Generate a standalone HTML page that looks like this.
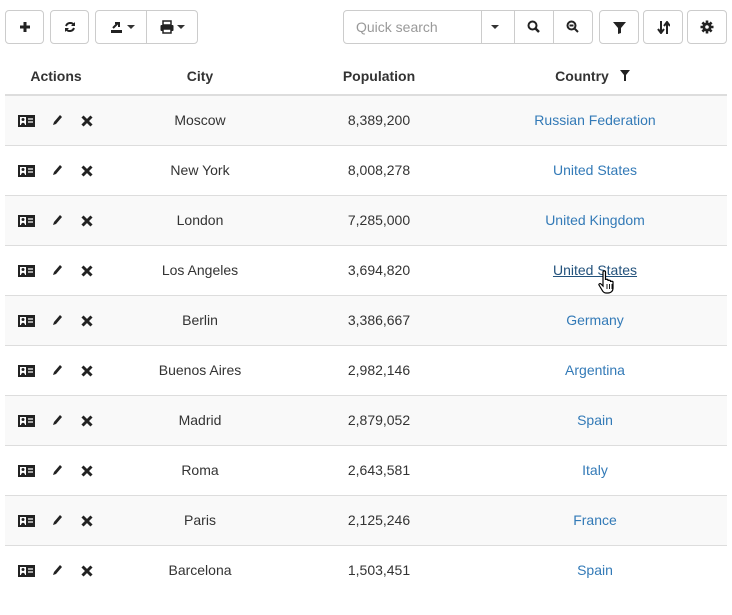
<!DOCTYPE html>
<html><head><style>
*{box-sizing:border-box;margin:0;padding:0}
body{width:732px;height:615px;background:#fff;font-family:"Liberation Sans",sans-serif;font-size:14px;color:#333;position:relative;overflow:hidden}
.b{position:absolute;top:10px;height:34px;border:1px solid #ccc;border-radius:4px;background:#fff;display:flex;align-items:center;justify-content:center}
.sep{position:absolute;top:0;bottom:0;width:1px;background:#ccc}
.caret{display:inline-block;width:0;height:0;border-left:4px solid transparent;border-right:4px solid transparent;border-top:4px solid #333;margin-left:3px}
.hdr{position:absolute;top:60px;height:36px;border-bottom:2px solid #ddd;left:5px;width:722px}
.hdr div{position:absolute;top:8px;font-weight:bold;transform:translateX(-50%)}
.row{position:absolute;left:5px;width:722px;height:50px;border-bottom:1px solid #ddd}
.row.o{background:#f9f9f9}
.c{position:absolute;top:16px;transform:translateX(-50%);white-space:nowrap}
a{color:#337ab7;text-decoration:none}
.ic{position:absolute;top:18px}
</style></head><body>
<div class="b" style="left:5px;width:39px"><svg width="12" height="12"><path d="M6 1v10M1 6h10" stroke="#222" stroke-width="3"/></svg></div>
<div class="b" style="left:50px;width:39px"><svg width="12" height="12" viewBox="0 0 12 12"><path d="M10 4A4.5 4.5 0 0 0 2 5M2 8a4.5 4.5 0 0 0 8-1" fill="none" stroke="#222" stroke-width="2"/><path d="M11 1v4H7zM1 11V7h4z" fill="#222"/></svg></div>
<div class="b" style="left:95px;width:103px"><div class="sep" style="left:50px"></div>
<div style="position:absolute;left:14px;top:9px;display:flex;align-items:center"><svg width="14" height="14" viewBox="0 0 14 14"><path d="M3 8l5-5M5 3h4v4" stroke="#222" stroke-width="2" fill="none"/><rect x="1" y="10" width="11" height="3" fill="#222"/></svg><span class="caret"></span></div>
<div style="position:absolute;left:64px;top:9px;display:flex;align-items:center"><svg width="14" height="14" viewBox="0 0 14 14"><rect x="3" y="1" width="8" height="4" fill="none" stroke="#222" stroke-width="1.5"/><rect x="0.5" y="5" width="13" height="6" rx="1" fill="#222"/><rect x="3" y="9" width="8" height="4" fill="#fff" stroke="#222" stroke-width="1.5"/></svg><span class="caret"></span></div></div>
<div class="b" style="left:343px;width:250px;justify-content:flex-start"><span style="color:#999;margin-left:12px">Quick search</span>
<div class="sep" style="left:137px"></div><div class="sep" style="left:170px"></div><div class="sep" style="left:209px"></div>
<span class="caret" style="position:absolute;left:147px;top:14px;margin:0"></span>
<svg style="position:absolute;left:183px;top:9px" width="13" height="13"><circle cx="5.5" cy="5.5" r="4" fill="none" stroke="#222" stroke-width="2"/><path d="M8.5 8.5l3.5 3.5" stroke="#222" stroke-width="2.5"/></svg>
<svg style="position:absolute;left:222px;top:9px" width="13" height="13"><circle cx="5.5" cy="5.5" r="4" fill="none" stroke="#222" stroke-width="2"/><path d="M8.5 8.5l3.5 3.5M3.5 5.5h4" stroke="#222" stroke-width="2"/></svg></div>
<div class="b" style="left:599px;width:40px"><svg width="13" height="13"><path d="M0 1h13L8 7v5l-3 1V7z" fill="#222"/></svg></div>
<div class="b" style="left:643px;width:40px"><svg width="13" height="13"><path d="M4 0v11M1 8l3 4 3-4M10 13V2M7 5l3-4 3 4" stroke="#222" stroke-width="2" fill="none"/></svg></div>
<div class="b" style="left:687px;width:40px"><svg width="14" height="14" viewBox="0 0 14 14"><circle cx="7" cy="7" r="4.5" fill="#222"/><path d="M7 0.5v13M0.5 7h13M2.4 2.4l9.2 9.2M11.6 2.4l-9.2 9.2" stroke="#222" stroke-width="2.6"/><circle cx="7" cy="7" r="1.8" fill="#fff"/></svg></div>
<div class="hdr"><div style="left:51px">Actions</div><div style="left:195px">City</div><div style="left:374px">Population</div><div style="left:577px">Country</div>
<svg style="position:absolute;left:615px;top:10px" width="10" height="11"><path d="M0 0h10L6 5v6H4V5z" fill="#222"/></svg></div>
<div id="rows"></div>
<script>
var d=[["Moscow","8,389,200","Russian Federation"],["New York","8,008,278","United States"],["London","7,285,000","United Kingdom"],["Los Angeles","3,694,820","United States"],["Berlin","3,386,667","Germany"],["Buenos Aires","2,982,146","Argentina"],["Madrid","2,879,052","Spain"],["Roma","2,643,581","Italy"],["Paris","2,125,246","France"],["Barcelona","1,503,451","Spain"]];
var h="";d.forEach(function(r,i){var hov=i==3;
h+='<div class="row'+(i%2==0?' o':'')+'" style="top:'+(96+i*50)+'px;'+(i==9?'border-bottom:none':'')+'">'+
'<svg class="ic" style="left:13px;top:19px" width="17" height="12"><rect width="17" height="12" fill="#222"/><rect x="2" y="2" width="6" height="8" fill="#fff"/><circle cx="5" cy="4.5" r="1.5" fill="#222"/><path d="M3 10c0-3 4-3 4 0" fill="#222"/><path d="M10 4h5M10 7h5" stroke="#fff" stroke-width="1.3"/></svg>'+
'<svg class="ic" style="left:47px" width="11" height="13"><path d="M8 1l2 2-6 7-3 1 1-3z" fill="#222"/></svg>'+
'<svg class="ic" style="left:76px;top:19px" width="12" height="12"><path d="M1.5 1.5l9 9M10.5 1.5l-9 9" stroke="#222" stroke-width="3"/></svg>'+
'<div class="c" style="left:195px">'+r[0]+'</div><div class="c" style="left:374px">'+r[1]+'</div>'+
'<div class="c" style="left:590px"><a'+(hov?' style="color:#23527c;text-decoration:underline"':'')+'>'+r[2]+'</a></div></div>';});
document.getElementById('rows').innerHTML=h;
</script>
<svg style="position:absolute;left:598px;top:270px" width="18" height="26" viewBox="0 0 18 26"><path d="M5 2c0-1.5 2.5-1.5 2.5 0v8c0-1 2.5-1 2.5 0v1c0-1 2.5-1 2.5 0v1c0-1 2.5-1 2.5 0v6c0 3-2 5-5 5H8c-2 0-3-1-4-3l-3-5c-0.5-1 1-2 2-1l2 2z" fill="#fff" stroke="#000" stroke-width="1.2"/><path d="M9 14v5M11.5 14v5M14 14v5" stroke="#000" stroke-width="0.9"/></svg>
</body></html>
